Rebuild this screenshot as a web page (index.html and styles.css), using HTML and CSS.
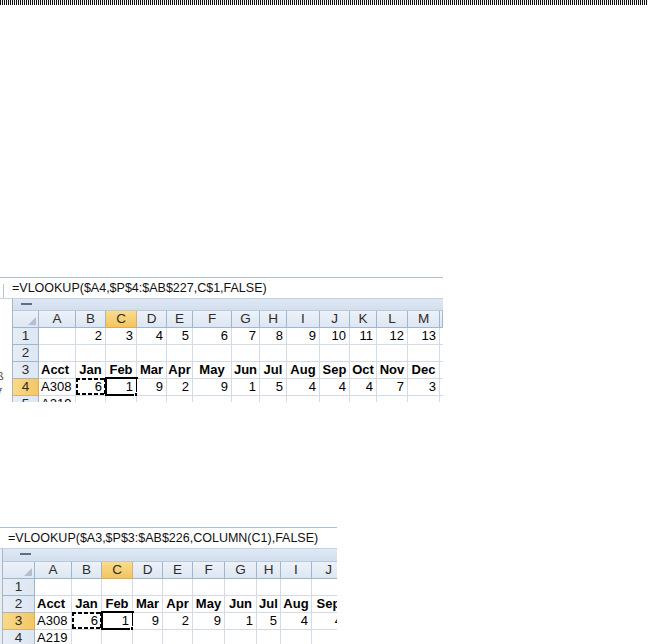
FILE: index.html
```html
<!DOCTYPE html>
<html>
<head>
<meta charset="utf-8">
<link rel="stylesheet" href="styles.css">
</head>
<body>
<div class="stripe"></div>

<section class="shot shot1">
  <div class="fbar"><span class="fsep"></span><span class="ftext">=VLOOKUP($A4,$P$4:$AB$227,C$1,FALSE)</span></div>
  <div class="body">
    <div class="side"><span class="mark m1">ß</span><span class="mark m2">ƒ</span></div>
    <div class="main">
      <div class="band"><span class="handle"></span></div>
      <div class="grid g1">
        <div class="corner"><span class="tri"></span></div>
        <div class="hdr">A</div><div class="hdr">B</div><div class="hdr sel">C</div><div class="hdr">D</div><div class="hdr">E</div><div class="hdr">F</div><div class="hdr">G</div><div class="hdr">H</div><div class="hdr">I</div><div class="hdr">J</div><div class="hdr">K</div><div class="hdr">L</div><div class="hdr">M</div><div class="hdr"></div>

        <div class="rh">1</div>
        <div class="c"></div><div class="c r">2</div><div class="c r">3</div><div class="c r">4</div><div class="c r">5</div><div class="c r">6</div><div class="c r">7</div><div class="c r">8</div><div class="c r">9</div><div class="c r">10</div><div class="c r">11</div><div class="c r">12</div><div class="c r">13</div><div class="c"></div>

        <div class="rh">2</div>
        <div class="c"></div><div class="c"></div><div class="c"></div><div class="c"></div><div class="c"></div><div class="c"></div><div class="c"></div><div class="c"></div><div class="c"></div><div class="c"></div><div class="c"></div><div class="c"></div><div class="c"></div><div class="c"></div>

        <div class="rh">3</div>
        <div class="c b">Acct</div><div class="c b m">Jan</div><div class="c b m">Feb</div><div class="c b m">Mar</div><div class="c b m">Apr</div><div class="c b m">May</div><div class="c b m">Jun</div><div class="c b m">Jul</div><div class="c b m">Aug</div><div class="c b m">Sep</div><div class="c b m">Oct</div><div class="c b m">Nov</div><div class="c b m">Dec</div><div class="c"></div>

        <div class="rh sel">4</div>
        <div class="c">A308</div><div class="c r marq">6<span class="ants"></span></div><div class="c r act">1<span class="selbox"><span class="fill"></span></span></div><div class="c r">9</div><div class="c r">2</div><div class="c r">9</div><div class="c r">1</div><div class="c r">5</div><div class="c r">4</div><div class="c r">4</div><div class="c r">4</div><div class="c r">7</div><div class="c r">3</div><div class="c"></div>

        <div class="rh">5</div>
        <div class="c">A219</div><div class="c"></div><div class="c"></div><div class="c"></div><div class="c"></div><div class="c"></div><div class="c"></div><div class="c"></div><div class="c"></div><div class="c"></div><div class="c"></div><div class="c"></div><div class="c"></div><div class="c"></div>
      </div>
    </div>
  </div>
</section>

<section class="shot shot2">
  <div class="fbar"><span class="ftext">=VLOOKUP($A3,$P$3:$AB$226,COLUMN(C1),FALSE)</span></div>
  <div class="body">
    <div class="side"></div>
    <div class="main">
      <div class="band"><span class="handle"></span></div>
      <div class="grid g2">
        <div class="corner"><span class="tri"></span></div>
        <div class="hdr">A</div><div class="hdr">B</div><div class="hdr sel">C</div><div class="hdr">D</div><div class="hdr">E</div><div class="hdr">F</div><div class="hdr">G</div><div class="hdr">H</div><div class="hdr">I</div><div class="hdr">J</div>

        <div class="rh">1</div>
        <div class="c"></div><div class="c"></div><div class="c"></div><div class="c"></div><div class="c"></div><div class="c"></div><div class="c"></div><div class="c"></div><div class="c"></div><div class="c"></div>

        <div class="rh">2</div>
        <div class="c b">Acct</div><div class="c b m">Jan</div><div class="c b m">Feb</div><div class="c b m">Mar</div><div class="c b m">Apr</div><div class="c b m">May</div><div class="c b m">Jun</div><div class="c b m">Jul</div><div class="c b m">Aug</div><div class="c b m">Sep</div>

        <div class="rh sel">3</div>
        <div class="c">A308</div><div class="c r marq">6<span class="ants"></span></div><div class="c r act">1<span class="selbox"><span class="fill"></span></span></div><div class="c r">9</div><div class="c r">2</div><div class="c r">9</div><div class="c r">1</div><div class="c r">5</div><div class="c r">4</div><div class="c r">4</div>

        <div class="rh">4</div>
        <div class="c">A219</div><div class="c"></div><div class="c"></div><div class="c"></div><div class="c"></div><div class="c"></div><div class="c"></div><div class="c"></div><div class="c"></div><div class="c"></div>
      </div>
    </div>
  </div>
</section>
</body>
</html>
```

FILE: styles.css
```css
html, body {
  margin: 0;
  padding: 0;
  background: #ffffff;
}

body {
  font-family: "Liberation Sans", Arial, sans-serif;
  color: #000;
}

.stripe {
  height: 5px;
  background: repeating-linear-gradient(90deg, #111 0 1px, #f4f4f4 1px 2px);
}

.shot {
  overflow: hidden;
  background: #fff;
}

.shot1 {
  margin-top: 272px;
  width: 443px;
  height: 125px;
}

.shot2 {
  margin-top: 125px;
  width: 337px;
  height: 117px;
}

/* formula bar */
.fbar {
  height: 20px;
  border-top: 1px solid #aebdd0;
  border-bottom: 1px solid #c5d3e4;
  display: flex;
  align-items: center;
  position: relative;
  background: #fff;
}

.fsep {
  width: 1px;
  height: 14px;
  margin-left: 3px;
  margin-top: 6px;
  background: #b8c4d4;
}

.ftext {
  font-size: 12.5px;
  line-height: 20px;
  white-space: nowrap;
  color: #111;
}

.shot1 .ftext { margin-left: 8px; }
.shot2 .ftext { margin-left: 8px; }

/* body */
.body {
  display: flex;
}

.side {
  flex: none;
  background: #fff;
  position: relative;
  overflow: hidden;
}

.shot1 .side {
  width: 12px;
  border-right: 1px solid #a9b6c6;
}

.shot2 .side {
  width: 2px;
  border-right: 1px solid #a9b6c6;
  background: #e8edf4;
}

.mark {
  position: absolute;
  left: -3px;
  font-size: 11px;
  color: #444;
  line-height: 11px;
}
.m1 { top: 72px; }
.m2 { top: 88px; }

.main {
  flex: 1;
  min-width: 0;
}

.band {
  background: linear-gradient(#dfe8f4, #d3dfee);
  border-bottom: 1px solid #b9c9dd;
  position: relative;
}

.shot1 .band { height: 11px; }
.shot2 .band { height: 12px; }

.handle {
  position: absolute;
  top: 4px;
  width: 11px;
  height: 2px;
  background: #5f6f82;
}

.shot1 .handle { left: 8px; }
.shot2 .handle { left: 17px; }

/* grid */
.grid {
  display: grid;
  grid-auto-rows: 17px;
  font-size: 13px;
  line-height: 16px;
}

.g1 {
  grid-template-columns: 26px 37px 30px 31px 30px 26px 39px 28px 27px 33px 30px 27px 31px 32px 3px;
}

.g2 {
  grid-template-columns: 32px 37px 30px 31px 30px 30px 32px 32px 24px 31px 34px;
}

.grid > div {
  box-sizing: border-box;
  white-space: nowrap;
  overflow: visible;
}

.corner {
  background: linear-gradient(#edf2f9, #dde6f2);
  border-right: 1px solid #9eb6ce;
  border-bottom: 1px solid #9eb6ce;
  position: relative;
}

.tri {
  position: absolute;
  right: 2px;
  bottom: 2px;
  width: 0;
  height: 0;
  border-left: 8px solid transparent;
  border-bottom: 8px solid #b3bfcd;
}

.hdr {
  background: linear-gradient(#edf2f9, #dde6f2);
  border-right: 1px solid #9eb6ce;
  border-bottom: 1px solid #9eb6ce;
  text-align: center;
  color: #2c2c2c;
  font-size: 13.5px;
}

.rh {
  background: linear-gradient(90deg, #e6edf6, #dde6f2);
  border-right: 1px solid #9eb6ce;
  border-bottom: 1px solid #9eb6ce;
  text-align: center;
  color: #2c2c2c;
  font-size: 13.5px;
}

.hdr.sel {
  background: linear-gradient(#f9dc8e, #f2c55f);
  border-bottom-color: #e9a93c;
  border-right-color: #e0b060;
}

.rh.sel {
  background: linear-gradient(90deg, #f9d98a, #f3c765);
  border-right-color: #e9a93c;
  border-bottom-color: #e0b060;
}

.c {
  background: #fff;
  border-right: 1px solid #d4dbe7;
  border-bottom: 1px solid #d4dbe7;
  padding: 0 2px;
  position: relative;
}

.c.r {
  text-align: right;
  padding-right: 3px;
}

.c.b {
  font-weight: bold;
}

.c.m {
  text-align: center;
  padding: 0;
}

/* copy marquee */
.ants {
  position: absolute;
  left: 0;
  top: -1px;
  right: -1px;
  bottom: 0;
  background:
    repeating-linear-gradient(90deg, #000 0 4px, transparent 4px 6px) top left / 100% 2px no-repeat,
    repeating-linear-gradient(90deg, #000 0 4px, transparent 4px 6px) bottom left / 100% 2px no-repeat,
    repeating-linear-gradient(180deg, #000 0 4px, transparent 4px 6px) top left / 2px 100% no-repeat,
    repeating-linear-gradient(180deg, #000 0 4px, transparent 4px 6px) top right / 2px 100% no-repeat;
}

/* active cell */
.selbox {
  position: absolute;
  left: -1px;
  top: -2px;
  right: -2px;
  bottom: -1px;
  border: 2px solid #000;
}

.fill {
  position: absolute;
  right: -5px;
  bottom: -5px;
  width: 5px;
  height: 5px;
  background: #000;
  border: 1px solid #fff;
}
```
